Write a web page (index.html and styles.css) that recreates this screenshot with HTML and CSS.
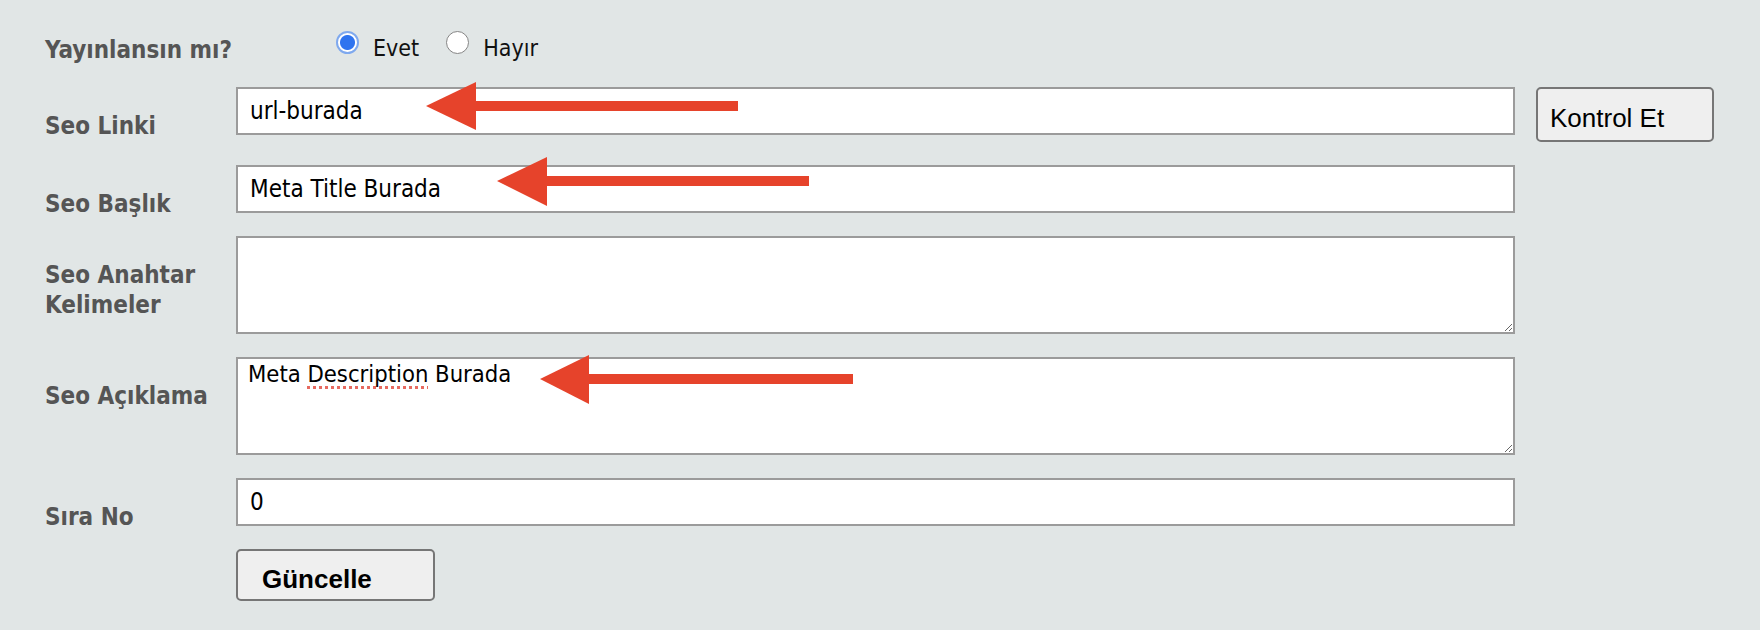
FILE: index.html
```html
<!DOCTYPE html>
<html lang="tr">
<head>
<meta charset="utf-8">
<title>SEO Ayarları</title>
<link rel="stylesheet" href="styles.css">
</head>
<body>
<form class="form">
  <div class="row row-publish">
    <span class="label">Yayınlansın mı?</span>
    <div class="radios">
      <label class="radio"><input type="radio" name="pub" checked><span>Evet</span></label>
      <label class="radio"><input type="radio" name="pub"><span>Hayır</span></label>
    </div>
  </div>
  <div class="row">
    <label class="label" for="seo-link">Seo Linki</label>
    <div class="field"><input class="text" id="seo-link" value="url-burada"></div>
    <button type="button" class="btn btn-check">Kontrol Et</button>
  </div>
  <div class="row">
    <label class="label" for="seo-title">Seo Başlık</label>
    <div class="field"><input class="text" id="seo-title" value="Meta Title Burada"></div>
  </div>
  <div class="row">
    <label class="label" for="seo-keys">Seo Anahtar Kelimeler</label>
    <div class="field"><textarea class="area" id="seo-keys"></textarea></div>
  </div>
  <div class="row">
    <span class="label">Seo Açıklama</span>
    <div class="field"><div class="area area-desc" role="textbox" aria-multiline="true" contenteditable="true">Meta <span class="misspelled">Description</span> Burada</div></div>
  </div>
  <div class="row">
    <label class="label" for="seo-order">Sıra No</label>
    <div class="field"><input class="text" id="seo-order" value="0"></div>
  </div>
  <div class="row row-submit">
    <button type="button" class="btn btn-submit">Güncelle</button>
  </div>
</form>
<svg class="arrows" width="1760" height="630" viewBox="0 0 1760 630" aria-hidden="true">
  <g fill="#e6432b">
    <polygon points="426,106 476,82 476,130"/>
    <rect x="474" y="101" width="264" height="10"/>
    <polygon points="497,181 547,157 547,206"/>
    <rect x="545" y="176" width="264" height="10"/>
    <polygon points="540,379 589,355 589,404"/>
    <rect x="587" y="374" width="266" height="10"/>
  </g>
</svg>
</body>
</html>
```
FILE: styles.css
```css
html, body {
  margin: 0;
  padding: 0;
}
body {
  position: relative;
  width: 1760px;
  height: 630px;
  overflow: hidden;
  background: #e1e6e6;
  font-family: "DejaVu Sans Condensed", "DejaVu Sans", sans-serif;
  font-stretch: condensed;
}
.form {
  display: flex;
  flex-direction: column;
  padding-left: 45px;
}
.row {
  display: flex;
  align-items: flex-start;
}
.row-publish {
  height: 87px;
}
.label {
  flex: none;
  width: 191px;
  box-sizing: border-box;
  padding-top: 24px;
  padding-right: 10px;
  font-size: 24px;
  font-weight: bold;
  line-height: 30px;
  color: #555;
}
.row-publish .label {
  padding-top: 35px;
  padding-right: 0;
  white-space: nowrap;
}
.radios {
  display: flex;
  padding-left: 100px;
  padding-top: 31px;
  gap: 27px;
}
.radio {
  display: flex;
  align-items: flex-start;
  font-size: 23px;
  line-height: 30px;
  color: #111;
}
.radio span {
  margin-top: 2px;
  margin-left: 14px;
}
.radio input {
  appearance: none;
  -webkit-appearance: none;
  margin: 0;
  width: 23px;
  height: 23px;
  border-radius: 50%;
  box-sizing: border-box;
  border: 1px solid #858585;
  background: #fff;
}
.radio input:checked {
  border: 2px solid #7fa9ee;
  background: radial-gradient(circle, #2f74ef 0 7px, #fff 8px);
}
.field {
  flex: none;
  width: 1279px;
  margin-bottom: 23px;
}
.text,
.area {
  display: block;
  width: 100%;
  box-sizing: border-box;
  border: 2px solid #9b9b9b;
  border-radius: 0;
  background: #fff;
  color: #000;
  font-family: "DejaVu Sans Condensed", "DejaVu Sans", sans-serif;
  font-stretch: condensed;
  font-size: 24px;
  outline: none;
  margin: 0;
}
.text {
  height: 48px;
  padding: 0 12px;
}
.area {
  height: 98px;
  padding: 1px 10px;
  line-height: 28px;
  resize: both;
  overflow: auto;
}
.area-desc {
  font-size: 23.6px;
}
.misspelled {
  text-decoration: underline dotted #e76a60;
  text-decoration-thickness: 3px;
  text-underline-offset: 4px;
  text-decoration-skip-ink: none;
}
.btn {
  box-sizing: border-box;
  border: 2px solid #767676;
  border-radius: 5px;
  background: #efefef;
  color: #000;
  font-family: "Liberation Sans", Arial, sans-serif;
  font-size: 26px;
  line-height: 30px;
  text-align: left;
  margin: 0;
}
.btn-check {
  flex: none;
  width: 178px;
  height: 55px;
  margin-left: 21px;
  margin-bottom: 23px;
  padding: 14px 0 7px 12px;
}
.row-submit {
  padding-left: 191px;
}
.btn-submit {
  width: 199px;
  height: 52px;
  padding: 13px 0 5px 24px;
  font-weight: bold;
}
.arrows {
  position: absolute;
  left: 0;
  top: 0;
  pointer-events: none;
}
```
